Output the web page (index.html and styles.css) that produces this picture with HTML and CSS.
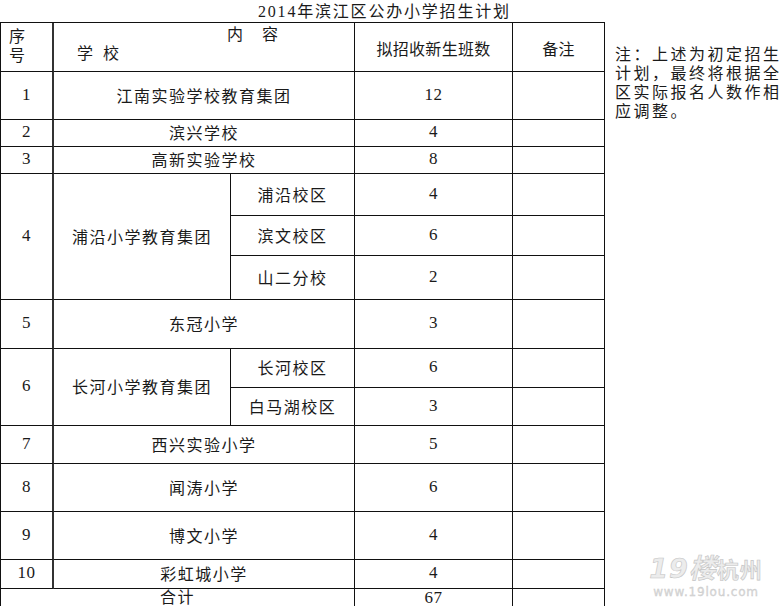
FILE: index.html
```html
<!DOCTYPE html>
<html lang="zh-CN">
<head>
<meta charset="utf-8">
<title>2014年滨江区公办小学招生计划</title>
<link rel="stylesheet" href="styles.css">
</head>
<body>
<div class="page">
  <div class="left">
    <div class="title">2014年滨江区公办小学招生计划</div>
    <div class="grid">
      <div class="c seq hseq">序<br>号</div>
      <div class="c s2 hcontent"><span class="l1">内　容</span><span class="l2">学 校</span></div>
      <div class="c hd">拟招收新生班数</div>
      <div class="c hd">备注</div>

      <div class="c seq">1</div>
      <div class="c s2">江南实验学校教育集团</div>
      <div class="c num">12</div>
      <div class="c"></div>

      <div class="c seq">2</div>
      <div class="c s2">滨兴学校</div>
      <div class="c num">4</div>
      <div class="c"></div>

      <div class="c seq">3</div>
      <div class="c s2">高新实验学校</div>
      <div class="c num">8</div>
      <div class="c"></div>

      <div class="c seq r3">4</div>
      <div class="c r3">浦沿小学教育集团</div>
      <div class="c">浦沿校区</div>
      <div class="c num">4</div>
      <div class="c"></div>
      <div class="c">滨文校区</div>
      <div class="c num">6</div>
      <div class="c"></div>
      <div class="c">山二分校</div>
      <div class="c num">2</div>
      <div class="c"></div>

      <div class="c seq">5</div>
      <div class="c s2">东冠小学</div>
      <div class="c num">3</div>
      <div class="c"></div>

      <div class="c seq r2">6</div>
      <div class="c r2">长河小学教育集团</div>
      <div class="c">长河校区</div>
      <div class="c num">6</div>
      <div class="c"></div>
      <div class="c">白马湖校区</div>
      <div class="c num">3</div>
      <div class="c"></div>

      <div class="c seq">7</div>
      <div class="c s2">西兴实验小学</div>
      <div class="c num">5</div>
      <div class="c"></div>

      <div class="c seq">8</div>
      <div class="c s2">闻涛小学</div>
      <div class="c num">6</div>
      <div class="c"></div>

      <div class="c seq">9</div>
      <div class="c s2">博文小学</div>
      <div class="c num">4</div>
      <div class="c"></div>

      <div class="c seq">10</div>
      <div class="c s2">彩虹城小学</div>
      <div class="c num">4</div>
      <div class="c"></div>

      <div class="c s3 total">合计</div>
      <div class="c num total">67</div>
      <div class="c total"></div>
    </div>
  </div>
  <div class="note">注：上述为初定招生<br>计划，最终将根据全<br>区实际报名人数作相<br>应调整。</div>
</div>
<div class="wm">
  <div class="wm-logo">19楼<span class="wm-city">杭州</span></div>
  <div class="wm-url">www.19lou.com</div>
</div>
</body>
</html>
```

FILE: styles.css
```css
html, body {
  margin: 0;
  padding: 0;
  background: #fff;
}
body {
  width: 780px;
  height: 606px;
  overflow: hidden;
  position: relative;
  font-family: "Liberation Serif", "Noto Sans CJK SC", serif;
  font-size: 16px;
  color: #1a1a1a;
}
.page {
  display: flex;
  align-items: flex-start;
}
.left {
  width: 605px;
  flex: none;
}
.title {
  height: 22px;
  line-height: 22px;
  padding-left: 258px;
  padding-top: 1px;
  box-sizing: border-box;
  letter-spacing: 1.8px;
  white-space: nowrap;
}
.grid {
  display: grid;
  grid-template-columns: 53px 177px 124px 158px 92px;
  grid-template-rows: 49px 48px 27px 27px 42px 40px 44px 49px 39px 38px 38px 48px 48px 29px 30px;
  border-top: 1px solid #111;
  border-left: 1px solid #111;
}
.c {
  box-sizing: border-box;
  border-right: 1px solid #111;
  border-bottom: 1px solid #111;
  display: flex;
  align-items: center;
  justify-content: center;
  letter-spacing: 1.5px;
  padding-bottom: 2px;
  white-space: nowrap;
}
.num {
  font-size: 17px;
  letter-spacing: 0.5px;
}
.seq {
  border-right: 2px solid #333;
  font-size: 17px;
  letter-spacing: 0.5px;
}
.s2 { grid-column: span 2; }
.s3 { grid-column: span 3; }
.r2 { grid-row: span 2; }
.r3 { grid-row: span 3; }
.total {
  align-items: flex-start;
  line-height: 16px;
  padding-top: 1px;
  padding-bottom: 0;
}
.hseq {
  display: block;
  font-size: 16px;
  line-height: 19px;
  padding: 4px 0 0 8px;
  letter-spacing: 0;
}
.hcontent {
  display: flex;
  flex-direction: column;
  align-items: flex-start;
  justify-content: flex-start;
  padding-top: 2px;
  padding-bottom: 0;
  line-height: 19px;
}
.hcontent .l1 {
  padding-left: 173px;
}
.hcontent .l2 {
  padding-left: 23px;
  word-spacing: 3px;
}
.hd {
  letter-spacing: 0.3px;
  padding-top: 2px;
  padding-bottom: 0;
}
.note {
  margin-left: 10px;
  margin-top: 45px;
  line-height: 19px;
  letter-spacing: 2.5px;
  white-space: nowrap;
}
.wm {
  position: absolute;
  left: 645px;
  top: 554px;
  width: 122px;
  color: #ececec;
  text-align: center;
}
.wm-logo {
  font-family: "DejaVu Sans", "Noto Sans CJK SC", sans-serif;
  font-size: 27px;
  font-weight: bold;
  font-style: italic;
  line-height: 30px;
  -webkit-text-stroke: 0.6px #c4c4c4;
  letter-spacing: 1px;
}
.wm-city {
  font-style: normal;
  font-size: 22px;
}
.wm-url {
  font-family: "DejaVu Sans", sans-serif;
  font-size: 12px;
  line-height: 13px;
  color: #d8d8d8;
  -webkit-text-stroke: 0.3px #c8c8c8;
  letter-spacing: 0.8px;
}
```
